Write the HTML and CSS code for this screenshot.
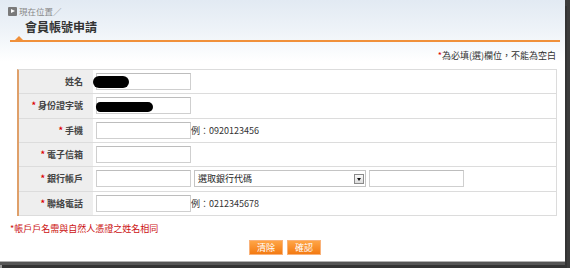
FILE: index.html
```html
<!DOCTYPE html>
<html lang="zh-Hant">
<head>
<meta charset="utf-8">
<title>會員帳號申請</title>
<link rel="stylesheet" href="styles.css">
</head>
<body>
<div class="frame">
  <div class="page">
    <div class="crumb"><span class="crumb-ico"></span>現在位置／</div>
    <h1 class="title">會員帳號申請</h1>
    <div class="rule"><span class="rule-tri"></span></div>
    <p class="note"><span class="req">*</span>為必填(選)欄位，不能為空白</p>
    <div class="form">
      <div class="row">
        <div class="lbl">姓名</div>
        <div class="val"><span class="field"><input class="inp" type="text"><span class="mask mask-1"></span></span></div>
      </div>
      <div class="row">
        <div class="lbl"><span class="req">*</span> 身份證字號</div>
        <div class="val"><span class="field"><input class="inp" type="text"><span class="mask mask-2"></span></span></div>
      </div>
      <div class="row">
        <div class="lbl"><span class="req">*</span> 手機</div>
        <div class="val"><input class="inp" type="text"><span class="eg">例：0920123456</span></div>
      </div>
      <div class="row">
        <div class="lbl"><span class="req">*</span> 電子信箱</div>
        <div class="val"><input class="inp" type="text"></div>
      </div>
      <div class="row">
        <div class="lbl"><span class="req">*</span> 銀行帳戶</div>
        <div class="val gap">
          <input class="inp" type="text">
          <span class="sel"><span class="sel-text">選取銀行代碼</span><span class="sel-btn"><span class="sel-arrow"></span></span></span>
          <input class="inp" type="text">
        </div>
      </div>
      <div class="row">
        <div class="lbl"><span class="req">*</span> 聯絡電話</div>
        <div class="val"><input class="inp" type="text"><span class="eg">例：0212345678</span></div>
      </div>
    </div>
    <p class="warn">*帳戶戶名需與自然人憑證之姓名相同</p>
    <div class="btns"><button class="btn" type="button">清除</button><button class="btn" type="button">確認</button></div>
  </div>
</div>
</body>
</html>
```

FILE: styles.css
```css
* { box-sizing: border-box; }
html, body { margin: 0; padding: 0; }
body {
  width: 570px;
  height: 268px;
  overflow: hidden;
  font-family: "Noto Sans CJK TC", "Noto Sans", sans-serif;
  font-size: 9px;
  color: #333;
}
.frame {
  width: 570px;
  height: 268px;
  background: linear-gradient(to right, #9a9a9a, #3c3c3c);
  display: flex;
  flex-direction: column;
}
.page {
  width: 565px;
  height: 262px;
  background: linear-gradient(to bottom, #e2eaf3 0, #eef3f8 30px, #ffffff 62px);
  border-bottom: 1px solid #b0b0b0;
  box-shadow: 0 3px 0 #555, 2px 6px 0 #333;
}
.crumb {
  padding: 5px 0 0 8px;
  line-height: 12px;
  height: 17px;
  color: #888;
  font-size: 8.5px;
  display: flex;
  align-items: center;
}
.crumb-ico {
  width: 9px;
  height: 9px;
  background: #7a7a7a;
  border-radius: 1px;
  margin-right: 2px;
  position: relative;
}
.crumb-ico::after {
  content: "";
  position: absolute;
  left: 3px;
  top: 2px;
  border-left: 4px solid #fff;
  border-top: 2.5px solid transparent;
  border-bottom: 2.5px solid transparent;
}
.title {
  margin: 2px 0 0 0;
  padding-left: 25px;
  font-size: 12px;
  line-height: 16px;
  font-weight: bold;
  color: #333;
}
.rule {
  margin: 5px 5px 0 10px;
  height: 2px;
  background: #f0903a;
  position: relative;
}
.rule-tri {
  position: absolute;
  left: 5px;
  bottom: 2px;
  border-left: 4px solid transparent;
  border-right: 4px solid transparent;
  border-bottom: 4px solid #f0903a;
}
.note {
  margin: 8px 0 0 0;
  padding-right: 9px;
  text-align: right;
  line-height: 12px;
  color: #333;
}
.req { color: #d00; }
.form {
  margin: 7px 0 0 17px;
  width: 540px;
  border-top: 1px solid #dcdcdc;
  border-right: 1px solid #dcdcdc;
  border-left: 2px solid #dfa06a;
}
.row {
  display: flex;
  height: 24.33px;
  border-bottom: 1px solid #dcdcdc;
}
.lbl {
  width: 74px;
  background: #eeeeee;
  text-align: right;
  padding-right: 10px;
  display: flex;
  align-items: center;
  justify-content: flex-end;
  font-weight: bold;
  color: #444;
  white-space: pre;
}
.val {
  flex: 1;
  display: flex;
  align-items: center;
  padding-left: 3px;
}
.val.gap { gap: 3px; }
.field { position: relative; display: flex; }
.inp {
  width: 95px;
  height: 17px;
  margin: 0;
  border: 1px solid #cfcfcf;
  border-top-color: #bdbdbd;
  background: #fff;
  padding: 0 2px;
  font: inherit;
}
.mask {
  position: absolute;
  background: #000;
}
.mask-1 { left: -3px; top: 3px; width: 36px; height: 12px; border-radius: 6px; }
.mask-2 { left: 0; top: 5px; width: 57px; height: 10px; border-radius: 5px 6px 6px 5px; }
.eg { color: #333; margin-left: 0; }
.sel {
  width: 172px;
  height: 17px;
  border: 1px solid #c4c4c4;
  background: #fff;
  display: flex;
  align-items: center;
  justify-content: space-between;
  padding-left: 3px;
  padding-right: 1px;
}
.sel-text { color: #222; }
.sel-btn {
  width: 10px;
  height: 10px;
  border: 1px solid #8a8a8a;
  background: linear-gradient(#fafafa, #dcdcdc);
  position: relative;
}
.sel-arrow {
  position: absolute;
  left: 2px;
  top: 3px;
  border-left: 2.5px solid transparent;
  border-right: 2.5px solid transparent;
  border-top: 3px solid #111;
}
.warn {
  margin: 7px 0 0 0;
  padding-left: 10px;
  line-height: 12px;
  color: #cc1111;
}
.btns {
  margin-top: 5px;
  padding-left: 249px;
  display: flex;
  gap: 4px;
}
.btn {
  width: 34px;
  height: 15px;
  margin: 0;
  padding: 0;
  border: 1px solid #f9b27a;
  background: linear-gradient(#ffa546, #f37a12);
  color: #fff;
  font: inherit;
  line-height: 13px;
}
```
